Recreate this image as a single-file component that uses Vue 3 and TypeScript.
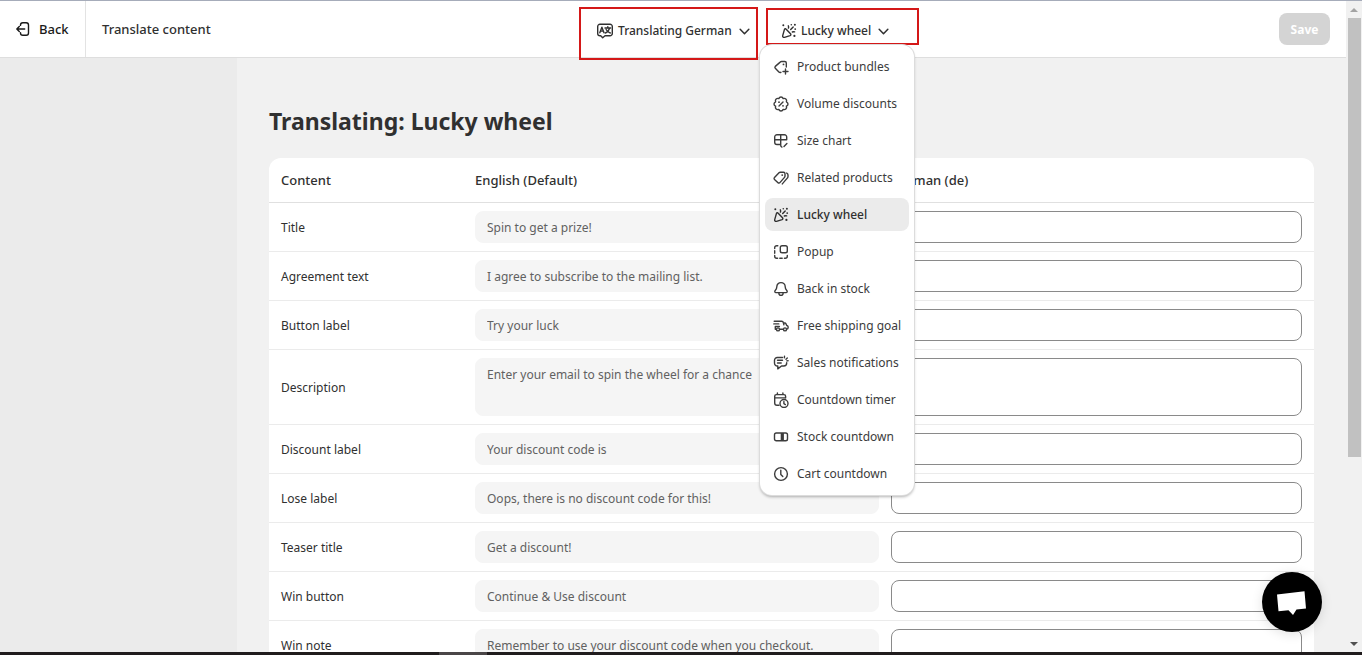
<script setup lang="ts">
import { ref } from 'vue'

interface Feature {
  name: string
  icon: string
}

interface Row {
  id: string
  label: string
  source: string
  multiline?: boolean
}

const icons: Record<string, string> = {
  bundle:
    '<path d="M13.300 8V4a1.500 1.500 0 0 0-1.500-1.500H8.600a2 2 0 0 0-1.400.6L2.300 7.400a1.300 1.300 0 0 0 0 1.900l3.600 3.700c.6.6 1.300.7 2 .3"/><path d="M12.500 10v5M10 12.500h5"/><circle class="dot" cx="10.500" cy="5.400" r=".9"/>',
  volume:
    '<path d="M8 1Q9.500 1 10.200 2.600Q11.900 2 12.900 3.100Q14 4.100 13.400 5.800Q15 6.500 15 8Q15 9.500 13.400 10.200Q14 11.900 12.900 12.900Q11.900 14 10.200 13.400Q9.500 15 8 15Q6.500 15 5.800 13.400Q4.100 14 3.100 12.900Q2 11.900 2.600 10.200Q1 9.500 1 8Q1 6.500 2.600 5.800Q2 4.100 3.100 3.100Q4.100 2 5.800 2.600Q6.500 1 8 1z"/><path d="M6 10l4-4"/><circle class="dot" cx="6" cy="6.200" r=".9"/><circle class="dot" cx="10" cy="9.800" r=".9"/>',
  size:
    '<path d="M13.700 6.700V4a2.300 2.300 0 0 0-2.300-2.300H4A2.300 2.300 0 0 0 1.700 4v5.200A2.300 2.300 0 0 0 4 11.500h3.200M1.700 6.700h12M7.700 1.700v10.500a2 2 0 0 0 1.200 1.900"/><path d="M11 13.500l2.900-3"/>',
  related:
    '<path d="M7.300 2.200h3.200A1.500 1.500 0 0 1 12 3.700v2.400a2 2 0 0 1-.5 1.300l-4.600 5.200a1.300 1.300 0 0 1-1.900.1L1.500 9.400a1.300 1.300 0 0 1 0-1.900L6 2.800a2 2 0 0 1 1.300-.6z"/><path d="M13.700 3.100c.9.400 1.300 1 1.300 1.900v1.600c0 .5-.2 1-.5 1.300l-5.200 6"/><circle class="dot" cx="9.200" cy="5.100" r=".9"/>',
  wheel:
    '<path d="M5.200 6.200l4.300 4.600c.6.7.4 1.500-.4 1.800l-5.600 1.700c-1.200.4-2.100-.5-1.800-1.700l1.700-6c.2-.9 1.200-1.100 1.800-.4z"/><path d="M7.300 2.800c.5.8.5 1.500.1 2.300M9.700 6.600l2.500-2.700M11.300 9c.8-.4 1.500-.4 2.300-.1"/><circle class="dot" cx="2.300" cy="2.300" r="1"/><circle class="dot" cx="10.300" cy="1.700" r=".8"/><circle class="dot" cx="13.900" cy="1.800" r="1"/><circle class="dot" cx="14.200" cy="6.100" r=".9"/><circle class="dot" cx="13.400" cy="12.900" r="1.100"/>',
  popup:
    '<rect x="7.300" y="1.700" width="7" height="7" rx="1.800"/><path d="M4.800 1.700H3.700a2 2 0 0 0-2 2v.9M1.700 6.800v2.400M1.700 11.400v.9a2 2 0 0 0 2 2h.9M6.800 14.300h2.400M11.400 14.300h.9a2 2 0 0 0 2-2v-.9"/>',
  bell:
    '<path d="M8 1.600a4.200 4.200 0 0 0-4.200 4.200c0 2-.5 2.700-1.600 3.800-.8.800-.3 2 .8 2h10c1.100 0 1.600-1.200.8-2-1.100-1.100-1.600-1.800-1.600-3.800A4.200 4.200 0 0 0 8 1.600z"/><path d="M5.900 11.800v.5a2.100 2.100 0 0 0 4.200 0v-.5"/>',
  truck:
    '<path d="M1.200 3.300h7.500c.9 0 1.500.5 1.700 1.300l.5 2.300M10.300 5h1.400c.6 0 1.100.3 1.300.9l.6 1.400 1 .6c.3.200.5.600.5 1v.8c0 .8-.5 1.300-1.300 1.300M10.200 11.200H6.700M.8 5.900h5M3.400 8.500H2.300v2.700h.9M3.400 8.500h3"/><circle cx="5" cy="11.400" r="1.500"/><circle cx="12" cy="11.400" r="1.500"/>',
  sales:
    '<path d="M9.500 2.500H4.500A2.800 2.800 0 0 0 1.500 5.300v2.800A2.800 2.800 0 0 0 4.500 11h.3v2.900L8.500 11h2.200a3 3 0 0 0 3-3V7.700M4.500 5.300h5M4.500 8h3.700M11.400 2.800l.1-1.500M13 4.200l1.300-1.200M13.800 5.900l1.300-.2"/>',
  timer:
    '<path d="M6 13.200H4a2.300 2.300 0 0 1-2.300-2.300V4.300C1.700 3.300 2.400 2.600 3.400 2.600h7.500c1 0 1.700.7 1.700 1.700V6M1.700 5.900h10.900M4.400.9v1.700M9.900.9v1.700"/><circle cx="11" cy="11.500" r="4"/><path d="M10.900 9.400v2.300l1.500.9"/>',
  stock:
    '<rect x="1.500" y="4" width="13" height="7.800" rx="1.800"/><rect class="dot" x="7.700" y="4" width="3.200" height="7.800"/>',
  clock:
    '<circle cx="8" cy="8" r="6.400"/><path d="M7.800 4.200v4.200l2 2"/>',
}

const features: Feature[] = [
  { name: 'Product bundles', icon: 'bundle' },
  { name: 'Volume discounts', icon: 'volume' },
  { name: 'Size chart', icon: 'size' },
  { name: 'Related products', icon: 'related' },
  { name: 'Lucky wheel', icon: 'wheel' },
  { name: 'Popup', icon: 'popup' },
  { name: 'Back in stock', icon: 'bell' },
  { name: 'Free shipping goal', icon: 'truck' },
  { name: 'Sales notifications', icon: 'sales' },
  { name: 'Countdown timer', icon: 'timer' },
  { name: 'Stock countdown', icon: 'stock' },
  { name: 'Cart countdown', icon: 'clock' },
]

const rows: Row[] = [
  { id: 'title', label: 'Title', source: 'Spin to get a prize!' },
  { id: 'agreement', label: 'Agreement text', source: 'I agree to subscribe to the mailing list.' },
  { id: 'button', label: 'Button label', source: 'Try your luck' },
  { id: 'description', label: 'Description', source: 'Enter your email to spin the wheel for a chance', multiline: true },
  { id: 'discount', label: 'Discount label', source: 'Your discount code is' },
  { id: 'lose', label: 'Lose label', source: 'Oops, there is no discount code for this!' },
  { id: 'teaser', label: 'Teaser title', source: 'Get a discount!' },
  { id: 'win-button', label: 'Win button', source: 'Continue & Use discount' },
  { id: 'win-note', label: 'Win note', source: 'Remember to use your discount code when you checkout.' },
]

const selected = ref('Lucky wheel')
const menuOpen = ref(true)
const translations = ref<Record<string, string>>({})

function choose(name: string) {
  selected.value = name
  menuOpen.value = false
}
</script>

<template>
  <div class="window">
    <div class="page">
      <header class="topbar">
        <button class="back" type="button">
          <svg class="icon" viewBox="0 0 16 16"><path d="M5.500 4.400V4A2.300 2.300 0 0 1 7.800 1.700h3.400A2.300 2.300 0 0 1 13.500 4v8a2.300 2.300 0 0 1-2.300 2.300H7.800A2.300 2.300 0 0 1 5.500 12v-.4M9.700 8H2M4.300 5.500L1.800 8l2.500 2.500" /></svg>
          Back
        </button>
        <span class="section">Translate content</span>
        <div class="pickers">
          <div class="picker language">
            <button type="button" class="picker-button">
              <svg class="icon wide" viewBox="0 0 18 16">
                <path d="M4 1.200h10A2.300 2.300 0 0 1 16.300 3.500v7A2.300 2.300 0 0 1 14 12.800H9l-2.300 2-2-2H4a2.300 2.300 0 0 1-2.300-2.300v-7A2.300 2.300 0 0 1 4 1.200z" />
                <path d="M3.800 9.800l2.100-5.600L8 9.800M4.500 8.100h2.800M9 5h5.600M11.800 3.600V5M13.600 5.200c-.6 2.200-2 3.800-4.200 4.800M10.100 6.500c.9 1.700 2.200 2.800 4.200 3.500" />
              </svg>
              Translating German
              <svg class="chevron" viewBox="0 0 12 12"><path d="M2 4l4 4 4-4" /></svg>
            </button>
          </div>
          <div class="picker feature">
            <button type="button" class="picker-button" :aria-expanded="menuOpen" @click="menuOpen = !menuOpen">
              <svg class="icon" viewBox="0 0 16 16" v-html="icons.wheel"></svg>
              {{ selected }}
              <svg class="chevron" viewBox="0 0 12 12"><path d="M2 4l4 4 4-4" /></svg>
            </button>
            <ul v-if="menuOpen" class="menu">
              <li v-for="f in features" :key="f.name">
                <button type="button" class="item" :class="{ active: f.name === selected }" @click="choose(f.name)">
                  <svg class="icon" viewBox="0 0 16 16" v-html="icons[f.icon]"></svg>
                  {{ f.name }}
                </button>
              </li>
            </ul>
          </div>
        </div>
        <button class="save" type="button" disabled>Save</button>
      </header>

      <div class="body">
        <aside class="sidebar"></aside>
        <main class="main">
          <h1>Translating: {{ selected }}</h1>
          <div class="card">
            <table>
              <colgroup>
                <col class="col-label" />
                <col class="col-source" />
                <col />
              </colgroup>
              <thead>
                <tr>
                  <th>Content</th>
                  <th>English (Default)</th>
                  <th>German (de)</th>
                </tr>
              </thead>
              <tbody>
                <tr v-for="row in rows" :key="row.id">
                  <td><label :for="row.id">{{ row.label }}</label></td>
                  <td>
                    <textarea v-if="row.multiline" class="field source" readonly :value="row.source" :aria-label="row.label + ' in English'"></textarea>
                    <input v-else class="field source" type="text" readonly :value="row.source" :aria-label="row.label + ' in English'" />
                  </td>
                  <td>
                    <textarea v-if="row.multiline" :id="row.id" v-model="translations[row.id]" class="field"></textarea>
                    <input v-else :id="row.id" v-model="translations[row.id]" class="field" type="text" />
                  </td>
                </tr>
              </tbody>
            </table>
          </div>
        </main>
      </div>
    </div>

    <div class="scrollbar" aria-hidden="true">
      <span class="arrow up"></span>
      <div class="track"><div class="thumb"></div></div>
      <span class="arrow down"></span>
    </div>

    <button class="chat" type="button" aria-label="Open chat">
      <svg viewBox="0 0 60 60"><path d="M15 22.500L42.500 19.300 44 36.500 34.500 37.500 31 43 26.500 38.300 16.500 39.300z" /></svg>
    </button>
    <div class="taskbar"><span></span></div>
  </div>
</template>

<style>
body {
  margin: 0;
}
</style>

<style scoped>
.window {
  position: relative;
  display: flex;
  height: 100vh;
  overflow: hidden;
  box-sizing: border-box;
  border-top: 1px solid #a6acba;
  background: #f1f1f1;
  color: #303030;
  font-family: "Noto Sans", "Open Sans", sans-serif;
  font-size: 12px;
  line-height: 20px;
}
.window * {
  box-sizing: border-box;
}
button,
input,
textarea {
  font: inherit;
  color: inherit;
}
button {
  border: 0;
  background: none;
  padding: 0;
}
.page {
  flex: 1;
  min-width: 0;
  display: flex;
  flex-direction: column;
}
.topbar {
  position: relative;
  z-index: 2;
  flex: none;
  display: flex;
  align-items: center;
  height: 57px;
  padding-right: 16px;
  background: #fff;
  border-bottom: 1px solid #dedede;
}
.back {
  display: flex;
  align-items: center;
  gap: 8px;
  width: 86px;
  height: 100%;
  padding-left: 15px;
  border-right: 1px solid #e3e3e3;
  color: #1a1a1a;
  font-size: 13px;
  font-weight: 500;
}
.section {
  width: 133px;
  padding-left: 16px;
  font-size: 13px;
  font-weight: 500;
  white-space: nowrap;
}
.pickers {
  flex: 1;
  align-self: flex-start;
  display: flex;
  justify-content: center;
  align-items: flex-start;
  gap: 8px;
  padding-top: 6px;
}
.picker {
  position: relative;
  border: 2px solid #d41818;
  font-weight: 500;
}
.language {
  width: 179px;
  height: 53px;
  padding: 12px 0 0 15px;
}
.feature {
  width: 153px;
  height: 37px;
  margin-top: 1px;
  padding: 11px 0 0 13px;
}
.picker-button {
  display: flex;
  align-items: center;
  gap: 4px;
  white-space: nowrap;
}
.icon,
.chevron {
  flex: none;
  width: 16px;
  height: 16px;
  fill: none;
  stroke: currentColor;
  stroke-width: 1.4;
  stroke-linecap: round;
  stroke-linejoin: round;
}
.icon.wide {
  width: 18px;
}
.icon :deep(.dot) {
  fill: currentColor;
  stroke: none;
}
.chevron {
  width: 13px;
  height: 13px;
  margin-left: 2px;
}
.menu {
  position: absolute;
  top: 35px;
  left: -8px;
  display: grid;
  gap: 4px;
  width: 154px;
  margin: 0;
  padding: 5px;
  list-style: none;
  background: #fff;
  border-radius: 12px;
  box-shadow: 0 0 0 1px #dcdcdc, 0 2px 3px rgba(0, 0, 0, 0.3);
}
.item {
  display: flex;
  align-items: center;
  gap: 8px;
  width: 100%;
  height: 33px;
  padding: 1px 0 0 8px;
  border-radius: 8px;
  color: #3c3c3c;
  white-space: nowrap;
  font-weight: 400;
}
.item.active {
  background: #ebebeb;
  color: #303030;
  font-weight: 500;
}
.save {
  width: 51px;
  height: 32px;
  padding-top: 1px;
  border-radius: 8px;
  background: #d4d4d4;
  color: #fff;
  font-weight: 700;
}
.body {
  flex: 1;
  min-height: 0;
  display: flex;
}
.sidebar {
  flex: none;
  width: 237px;
  background: #ebebeb;
}
.main {
  flex: 1;
  min-width: 0;
  padding: 47px 32px 0;
}
h1 {
  margin: 0 0 21px;
  font-size: 23px;
  line-height: 32px;
  font-weight: 700;
}
.card {
  overflow: hidden;
  background: #fff;
  border-radius: 12px;
}
table {
  width: 100%;
  table-layout: fixed;
  border-collapse: separate;
  border-spacing: 0;
}
.col-label {
  width: 200px;
}
.col-source {
  width: 39.8%;
}
th {
  height: 45px;
  padding: 0 6px;
  border-bottom: 1px solid #e0e0e0;
  text-align: left;
  font-size: 13px;
  font-weight: 500;
}
td {
  padding: 8px 6px;
  border-bottom: 1px solid #ebebeb;
}
td label {
  display: block;
  padding-top: 2px;
}
th:first-child,
td:first-child {
  padding-left: 12px;
}
th:last-child,
td:last-child {
  padding-right: 12px;
}
.field {
  display: block;
  width: 100%;
  height: 32px;
  margin: 0;
  padding: 5px 11px;
  border: 1px solid #8a8a8a;
  border-radius: 8px;
  background: #fff;
  outline: none;
  resize: none;
}
textarea.field {
  height: 58px;
  padding-top: 6px;
}
.field.source {
  border-color: #f5f5f5;
  background: #f5f5f5;
  color: #616161;
}
.scrollbar {
  flex: none;
  display: flex;
  flex-direction: column;
  align-items: center;
  width: 16px;
  padding: 7px 0 9px;
  background: #f1f1f1;
}
.arrow {
  border: 4px solid transparent;
}
.up {
  border-top: 0;
  border-bottom-color: #a3a3a3;
}
.down {
  border-bottom: 0;
  border-top-color: #505050;
}
.track {
  flex: 1;
  width: 13px;
  padding: 6px 0 5px;
}
.thumb {
  height: 71%;
  background: #c1c1c1;
}
.chat {
  position: absolute;
  right: 40px;
  bottom: 23px;
  width: 60px;
  height: 60px;
  border-radius: 50%;
  background: #000;
  box-shadow: 0 2px 12px rgba(0, 0, 0, 0.12);
}
.chat svg {
  display: block;
  fill: #fff;
}
.taskbar {
  position: absolute;
  right: 0;
  bottom: 0;
  left: 0;
  height: 3px;
  padding-left: 439px;
  background: #201c1d;
}
.taskbar span {
  display: block;
  width: 48px;
  height: 100%;
  background: #4a4647;
}
</style>
